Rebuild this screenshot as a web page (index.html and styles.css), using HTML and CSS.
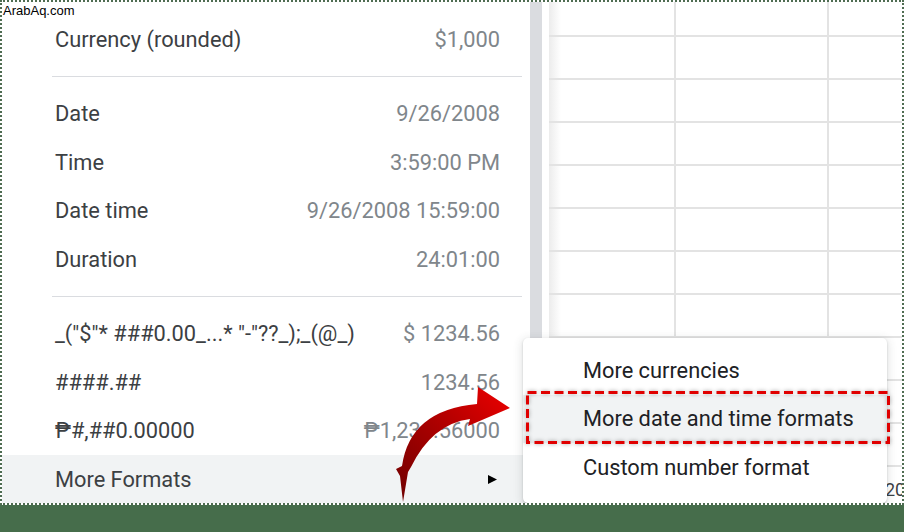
FILE: index.html
```html
<!DOCTYPE html>
<html>
<head lang="en">
    <title>More Formats</title>
    <link rel="stylesheet" href="styles.css">
</head>
<body>
    <div class="frame">
        <span class="watermark">ArabAq.com</span>

        <div class="menu">
            <div class="item"><span>Currency (rounded)</span><span class="val">$1,000</span></div>
            <div class="sep"></div>
            <div class="item"><span>Date</span><span class="val">9/26/2008</span></div>
            <div class="item"><span>Time</span><span class="val">3:59:00 PM</span></div>
            <div class="item"><span>Date time</span><span class="val">9/26/2008 15:59:00</span></div>
            <div class="item"><span>Duration</span><span class="val">24:01:00</span></div>
            <div class="sep"></div>
            <div class="item"><span>_("$"* ###0.00_...* "-"??_);_(@_)</span><span class="val">$ 1234.56</span></div>
            <div class="item"><span>####.##</span><span class="val">1234.56</span></div>
            <div class="item"><span>₱#,##0.00000</span><span class="val">₱1,234.56000</span></div>
            <div class="item active">
                <span>More Formats</span>
                <svg class="caret" width="9" height="9" viewBox="0 0 9 9"><polygon points="0,0 9,4.5 0,9" fill="#000"/></svg>
            </div>
        </div>

        <div class="scrollbar"></div>

        <div class="sheet">
            <div></div><div></div><div></div>
            <div></div><div></div><div></div>
            <div></div><div></div><div></div>
            <div></div><div></div><div></div>
            <div></div><div></div><div></div>
            <div></div><div></div><div></div>
            <div></div><div></div><div></div>
            <div></div><div></div><div></div>
            <div></div><div></div><div></div>
            <div></div><div></div><div></div>
            <div></div><div></div><div></div>
            <div></div><div></div><div class="num">2020</div>
        </div>

        <div class="submenu">
            <div class="sub-item">More currencies</div>
            <div class="sub-item hover">More date and time formats</div>
            <div class="sub-item">Custom number format</div>
        </div>

        <!-- red dashed highlight drawn on top of the screenshot -->
        <svg class="callout" width="364" height="53" viewBox="0 0 364 53">
            <rect x="1.5" y="1.5" width="361" height="50" fill="none" stroke="#e00000" stroke-width="3" stroke-dasharray="9 4.5"/>
        </svg>

        <svg class="arrow" width="130" height="126" viewBox="0 0 130 126">
            <defs>
                <linearGradient id="red" x1="0" y1="1" x2="1" y2="0">
                    <stop offset="0" stop-color="#6e0000"/>
                    <stop offset="0.55" stop-color="#b00000"/>
                    <stop offset="1" stop-color="#ee0000"/>
                </linearGradient>
            </defs>
            <path d="M13 122 L10 96 L6 89 L12 86 Q20 30 87 24 L88 7 L120 28 L78 46 L80 39 Q42 44 21 87 L18 92 Z" fill="url(#red)"/>
        </svg>
    </div>
    <div class="band"></div>
</body>
</html>
```

FILE: styles.css
```css
body {
    margin: 0;
    font-family: Roboto, "Noto Sans", sans-serif;
    background: #fff;
}

.frame {
    position: relative;
    display: flex;
    width: 904px;
    height: 505px;
    box-sizing: border-box;
    border: 2px dotted #4f6d52;
    overflow: hidden;
    background: #fff;
}

.watermark {
    position: absolute;
    left: 1px;
    top: 1px;
    font-family: "Liberation Sans", Arial, sans-serif;
    font-size: 13px;
    color: #000;
    background: #fff;
    z-index: 3;
}

.menu {
    flex: none;
    width: 528px;
    padding-top: 13px;
}

.item {
    display: flex;
    align-items: center;
    justify-content: space-between;
    height: 48.5px;
    padding: 0 30px 0 53px;
    font-size: 21.8px;
    color: #3c4043;
    white-space: nowrap;
}

.item .val {
    color: #80868b;
}

.item.active {
    background: #f1f3f4;
}

.caret {
    margin-right: 3px;
}

.sep {
    height: 1.5px;
    margin: 12px 8px 12.5px 50px;
    background: #dadce0;
}

.scrollbar {
    flex: none;
    width: 12px;
    background: #dadce0;
}

.sheet {
    flex: 1;
    margin-left: 7px;
    display: grid;
    grid-template-columns: 127px 153px 1fr;
    grid-template-rows: 35px;
    grid-auto-rows: 43px;
    align-content: start;
    background: linear-gradient(to right, #ececec, #fff 12px);
}

.sheet div {
    border-right: 2px solid #e3e3e3;
    border-bottom: 2px solid #e3e3e3;
}

.sheet .num {
    padding: 12px 0 0 56px;
    font-size: 18px;
    color: #3c4043;
}

.submenu {
    position: absolute;
    left: 521px;
    top: 336px;
    width: 364px;
    height: 165px;
    box-sizing: border-box;
    padding-top: 8px;
    background: #fff;
    border-radius: 5px;
    box-shadow: 0 1px 2px rgba(60, 64, 67, 0.25), 0 2px 8px 2px rgba(60, 64, 67, 0.12);
    z-index: 1;
}

.sub-item {
    display: flex;
    align-items: center;
    height: 48.5px;
    padding-left: 60px;
    font-size: 21.8px;
    color: #202124;
    white-space: nowrap;
}

.sub-item.hover {
    background: #f1f3f4;
}

.callout {
    position: absolute;
    left: 524px;
    top: 389px;
    filter: drop-shadow(0 0 2px rgba(0, 0, 0, 0.35));
    z-index: 2;
}

.arrow {
    position: absolute;
    left: 388px;
    top: 378px;
    z-index: 2;
}

.band {
    width: 904px;
    height: 27px;
    background: #466d4b;
}
```
